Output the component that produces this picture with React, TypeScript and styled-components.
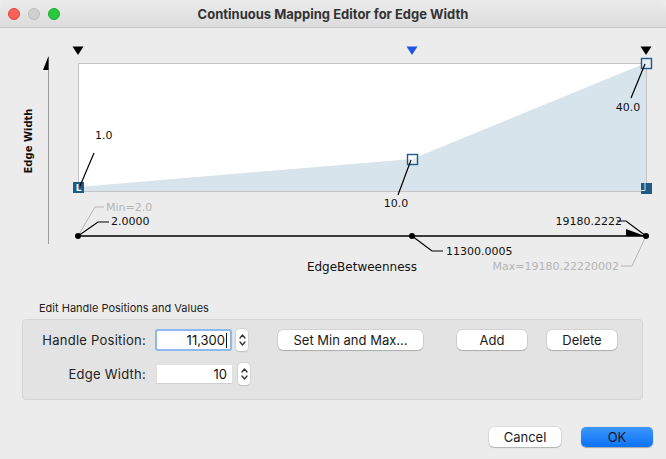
import React from "react";
import styled, { createGlobalStyle } from "styled-components";

const Global = createGlobalStyle`
  html, body { margin: 0; padding: 0; background: #ececec; }
  body { font-family: Inter, "Liberation Sans", sans-serif; }
  * { box-sizing: border-box; }
`;

const Window = styled.div`
  width: 666px;
  height: 459px;
  background: #ececec;
  display: flex;
  flex-direction: column;
  overflow: hidden;
  border-radius: 10px 10px 0 0;
`;

const TitleBar = styled.div`
  height: 28px;
  flex: none;
  display: flex;
  align-items: center;
  position: relative;
  background: linear-gradient(#ebebeb, #dcdcdc);
  border-bottom: 1px solid #c4c4c4;
`;

const Lights = styled.div`
  display: flex;
  gap: 8px;
  padding-left: 8px;
`;

const Light = styled.span<{ $c: string; $b: string }>`
  width: 12px;
  height: 12px;
  border-radius: 50%;
  background: ${(p) => p.$c};
  border: 0.5px solid ${(p) => p.$b};
`;

const Title = styled.div`
  flex: 1;
  text-align: center;
  margin-right: 60px;
  font-size: 13px;
  font-weight: 700;
  color: #333;
`;

const Chart = styled.svg`
  display: block;
  flex: none;
`;

const SectionLabel = styled.div`
  margin: 2px 0 0 39px;
  height: 14px;
  line-height: 14px;
  font-size: 11px;
  color: #222;
  flex: none;
`;

const Group = styled.div`
  margin: 4px 23px 0 22px;
  height: 81px;
  flex: none;
  background: #e3e3e3;
  border: 1px solid #d6d6d6;
  border-radius: 4px;
  padding-top: 9px;
  display: flex;
  flex-direction: column;
  gap: 12px;
`;

const Row = styled.div`
  display: flex;
  align-items: center;
  height: 22px;
`;

const Label = styled.div`
  width: 123px;
  text-align: right;
  font-size: 13px;
  letter-spacing: 0.25px;
  color: #222;
  margin-right: 9px;
`;

const Input = styled.div<{ $focus?: boolean }>`
  width: 77px;
  height: ${(p) => (p.$focus ? 22 : 20)}px;
  margin: ${(p) => (p.$focus ? "0" : "0 1px")};
  background: #fff;
  border: ${(p) => (p.$focus ? "2px solid #8db8ee" : "1px solid #e0e0e0")};
  border-bottom-color: ${(p) => (p.$focus ? "#8db8ee" : "#d0d0d0")};
  border-radius: ${(p) => (p.$focus ? "3px" : "0")};
  display: flex;
  align-items: center;
  justify-content: flex-end;
  padding-right: ${(p) => (p.$focus ? 3 : 5)}px;
  font-size: 13px;
  color: #111;
`;

const Caret = styled.span`
  display: inline-block;
  width: 1px;
  height: 15px;
  background: #111;
  margin-left: 1px;
`;

const Spinner = styled.div`
  width: 12px;
  height: 22px;
  margin-left: 4px;
  background: #fff;
  border-radius: 4px;
  box-shadow: 0 0 0 0.5px #c8c8c8, 0 0.5px 1px rgba(0, 0, 0, 0.2);
  display: flex;
  flex-direction: column;
  align-items: center;
  justify-content: center;
`;

const Button = styled.div<{ $w: number; $ml: number; $primary?: boolean }>`
  width: ${(p) => p.$w}px;
  height: 20px;
  margin-left: ${(p) => p.$ml}px;
  border-radius: 5px;
  background: ${(p) => (p.$primary ? "linear-gradient(#3d97fd, #0b72f6)" : "#fff")};
  box-shadow: ${(p) =>
    p.$primary
      ? "0 0.5px 1px rgba(0,0,0,0.3)"
      : "0 0 0 0.5px rgba(0,0,0,0.15), 0 1px 1px rgba(0,0,0,0.18)"};
  display: flex;
  align-items: center;
  justify-content: center;
  font-size: 13px;
  color: #1a1a1a;
`;

const Footer = styled.div`
  display: flex;
  justify-content: flex-end;
  padding-right: 13px;
  margin-top: 27px;
  flex: none;
`;

const chartFont = `"DejaVu Sans", "Liberation Sans", sans-serif`;

function ChartView() {
  const dark = "#1d5a85";
  const gray = "#b4b4b4";
  return (
    <Chart width={666} height={271} viewBox="0 28 666 271">
      <g fontFamily={chartFont} fontSize={11} fill="#111">
        {/* left axis */}
        <line x1={48.5} y1={57} x2={48.5} y2={244} stroke="#9a9a9a" />
        <polygon points="43,70 48.5,56 48.5,70" fill="#000" />
        <text
          transform="translate(32,141) rotate(-90)"
          textAnchor="middle"
          fontWeight={700}
          fontSize={10}
        >
          Edge Width
        </text>

        {/* top markers */}
        <polygon points="72.5,46.5 83.5,46.5 78,55" fill="#000" />
        <polygon points="406.5,46.5 417.5,46.5 412,55" fill="#1f55e8" />
        <polygon points="640.5,46.5 651.5,46.5 646,55" fill="#000" />

        {/* plot */}
        <rect x={78.5} y={63.5} width={568} height={128} fill="#fff" stroke="#c3c3c3" />
        <polygon points="79,187 412,159 646,63 646,191 79,191" fill="#d8e4ec" />
        <line x1={78.5} y1={191.5} x2={646.5} y2={191.5} stroke="#c3c3c3" />

        {/* handles */}
        <rect x={73} y={182} width={11} height={11} fill={dark} />
        <text x={78.5} y={191} textAnchor="middle" fill="#fff" fontSize={9} fontWeight={700}>
          L
        </text>
        <rect x={407.5} y={154.5} width={10} height={10} fill="#fff" fillOpacity={0.4} stroke={dark} strokeWidth={1.4} />
        <rect x={641.5} y={58.5} width={10} height={10} fill="#e6eef3" stroke={dark} strokeWidth={1.4} />
        <rect x={641} y={183} width={11} height={11} fill={dark} />
        <polyline points="645,183 645,190.5 641,190.5" fill="none" stroke="#d8e4ec" strokeWidth={1} />

        {/* value labels */}
        <line x1={94} y1={153} x2={80} y2={186} stroke="#000" strokeWidth={1.2} />
        <text x={95} y={139}>1.0</text>
        <line x1={398} y1={195} x2={411} y2={160} stroke="#000" strokeWidth={1.2} />
        <text x={396} y={207} textAnchor="middle">10.0</text>
        <line x1={631} y1={98} x2={645} y2={64} stroke="#000" strokeWidth={1.2} />
        <text x={628} y={111} textAnchor="middle">40.0</text>

        {/* bottom axis */}
        <line x1={78} y1={236} x2={646} y2={236} stroke="#000" strokeWidth={1.3} />
        <polygon points="626,229 626,236 645,236" fill="#000" />
        <polyline points="78,236 95,207 104,207" fill="none" stroke={gray} strokeWidth={1} />
        <text x={106} y={211} fill={gray}>Min=2.0</text>
        <polyline points="78,236 98,222 109,222" fill="none" stroke="#000" strokeWidth={1.2} />
        <text x={111} y={225}>2.0000</text>
        <polyline points="412,236 432,251 443,251" fill="none" stroke="#000" strokeWidth={1.2} />
        <text x={446} y={255}>11300.0005</text>
        <polyline points="646,236 632,266 621,266" fill="none" stroke={gray} strokeWidth={1} />
        <text x={619} y={270} textAnchor="end" fill={gray}>Max=19180.22220002</text>
        <text x={622} y={225} textAnchor="end">19180.2222</text>
        <polyline points="646,236 626,221 617,221" fill="none" stroke="#000" strokeWidth={1.2} />
        <circle cx={78} cy={236} r={3} fill="#000" />
        <circle cx={412} cy={236} r={3} fill="#000" />
        <circle cx={646} cy={236} r={3} fill="#000" />

        <text x={362} y={271} textAnchor="middle" fontSize={12}>
          EdgeBetweenness
        </text>
      </g>
    </Chart>
  );
}

function SpinIcon() {
  return (
    <svg width={9} height={16} viewBox="0 0 9 16">
      <polyline points="2,6 4.5,3 7,6" fill="none" stroke="#333" strokeWidth={1.3} strokeLinecap="round" strokeLinejoin="round" />
      <polyline points="2,10 4.5,13 7,10" fill="none" stroke="#333" strokeWidth={1.3} strokeLinecap="round" strokeLinejoin="round" />
    </svg>
  );
}

export default function App() {
  return (
    <Window>
      <Global />
      <TitleBar>
        <Lights>
          <Light $c="#fe5f57" $b="#e0443e" />
          <Light $c="#d0d0d0" $b="#bdbdbd" />
          <Light $c="#28c840" $b="#1aab29" />
        </Lights>
        <Title>Continuous Mapping Editor for Edge Width</Title>
      </TitleBar>
      <ChartView />
      <SectionLabel>Edit Handle Positions and Values</SectionLabel>
      <Group>
        <Row>
          <Label>Handle Position:</Label>
          <Input $focus>
            11,300
            <Caret />
          </Input>
          <Spinner>
            <SpinIcon />
          </Spinner>
          <Button $w={145} $ml={30}>Set Min and Max...</Button>
          <Button $w={70} $ml={34}>Add</Button>
          <Button $w={70} $ml={20}>Delete</Button>
        </Row>
        <Row>
          <Label>Edge Width:</Label>
          <Input>10</Input>
          <Spinner>
            <SpinIcon />
          </Spinner>
        </Row>
      </Group>
      <Footer>
        <Button $w={72} $ml={0}>Cancel</Button>
        <Button $w={72} $ml={20} $primary>OK</Button>
      </Footer>
    </Window>
  );
}
